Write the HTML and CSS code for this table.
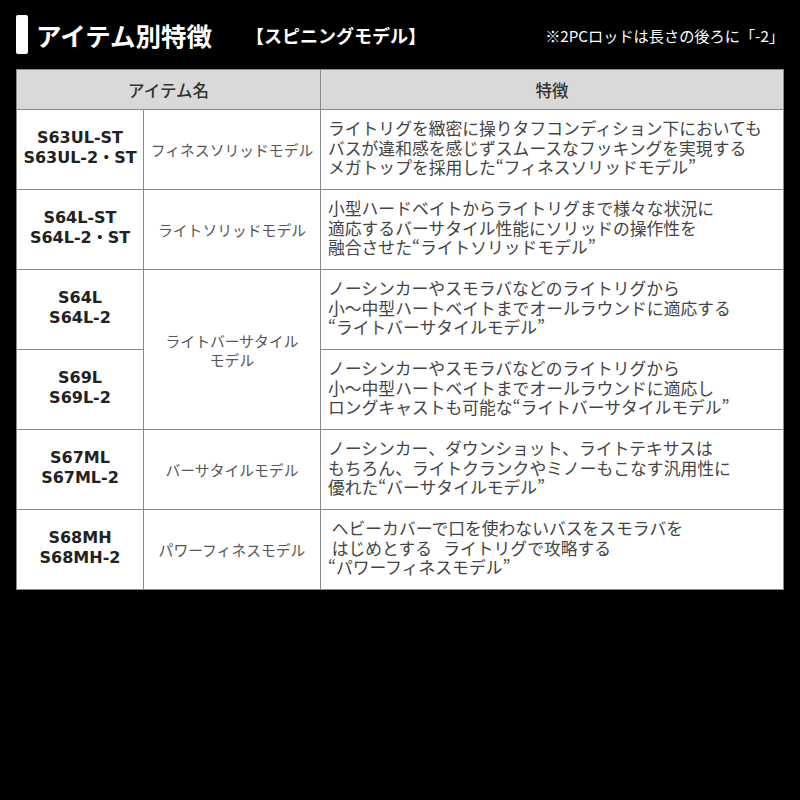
FILE: index.html
```html
<!DOCTYPE html>
<html lang="ja">
<head>
<meta charset="utf-8">
<link rel="stylesheet" href="styles.css">
</head>
<body>
<div class="page">
  <header class="head">
    <span class="bar"></span>
    <h1 class="title">アイテム別特徴</h1>
    <span class="sub">【スピニングモデル】</span>
    <span class="note">※2PCロッドは長さの後ろに「-2」</span>
  </header>
  <div class="grid">
    <div class="th th-item">アイテム名</div>
    <div class="th">特徴</div>

    <div class="model">S63UL-ST<br>S63UL-2・ST</div>
    <div class="type">フィネスソリッドモデル</div>
    <div class="desc">ライトリグを緻密に操りタフコンディション下においても<br>バスが違和感を感じずスムースなフッキングを実現する<br>メガトップを採用した“フィネスソリッドモデル”</div>

    <div class="model">S64L-ST<br>S64L-2・ST</div>
    <div class="type">ライトソリッドモデル</div>
    <div class="desc">小型ハードベイトからライトリグまで様々な状況に<br>適応するバーサタイル性能にソリッドの操作性を<br>融合させた“ライトソリッドモデル”</div>

    <div class="model">S64L<br>S64L-2</div>
    <div class="type span2">ライトバーサタイル<br>モデル</div>
    <div class="desc">ノーシンカーやスモラバなどのライトリグから<br>小～中型ハートベイトまでオールラウンドに適応する<br>“ライトバーサタイルモデル”</div>

    <div class="model">S69L<br>S69L-2</div>
    <div class="desc">ノーシンカーやスモラバなどのライトリグから<br>小～中型ハートベイトまでオールラウンドに適応し<br>ロングキャストも可能な“ライトバーサタイルモデル”</div>

    <div class="model">S67ML<br>S67ML-2</div>
    <div class="type">バーサタイルモデル</div>
    <div class="desc">ノーシンカー、ダウンショット、ライトテキサスは<br>もちろん、ライトクランクやミノーもこなす汎用性に<br>優れた“バーサタイルモデル”</div>

    <div class="model">S68MH<br>S68MH-2</div>
    <div class="type">パワーフィネスモデル</div>
    <div class="desc pre"> ヘビーカバーで口を使わないバスをスモラバを<br> はじめとする   ライトリグで攻略する<br>“パワーフィネスモデル”</div>
  </div>
</div>
</body>
</html>
```
FILE: styles.css
```css
html, body {
  margin: 0;
  padding: 0;
  background: #000;
}
body {
  width: 800px;
  height: 800px;
  font-family: "Noto Sans CJK JP", "Noto Sans", sans-serif;
}
.page {
  padding: 15px 16px 0 16px;
}
.head {
  display: flex;
  align-items: center;
  height: 39px;
  color: #fff;
}
.bar {
  width: 12px;
  height: 39px;
  background: #fff;
  border-radius: 2px;
  flex: none;
}
.title {
  margin: 0 0 0 8px;
  font-size: 25.5px;
  font-weight: 700;
  line-height: 1;
  letter-spacing: 0;
}
.sub {
  margin-left: 34px;
  font-size: 18px;
  font-weight: 700;
}
.note {
  margin-left: auto;
  font-size: 15.2px;
  font-weight: 400;
}
.grid {
  margin-top: 15px;
  display: grid;
  grid-template-columns: 126px 176px 1fr;
  grid-template-rows: 39px repeat(6, 79px);
  gap: 1px;
  background: #8a8a8a;
  border: 1px solid #8a8a8a;
}
.grid > div {
  background: #fff;
  display: flex;
  align-items: center;
}
.grid > .th {
  background: #d9d9d9;
  justify-content: center;
  color: #333;
  font-size: 16.5px;
  font-weight: 500;
}
.th-item {
  grid-column: 1 / 3;
}
.model {
  justify-content: center;
  text-align: center;
  font-family: "DejaVu Sans", "Noto Sans CJK JP", sans-serif;
  font-weight: 700;
  font-size: 16px;
  line-height: 20px;
  color: #222;
  padding-bottom: 3px;
}
.type {
  justify-content: center;
  text-align: center;
  color: #555;
  font-size: 14.8px;
  line-height: 19px;
}
.span2 {
  grid-row: span 2;
}
.desc {
  padding-left: 7px;
  color: #444;
  font-size: 16.8px;
  line-height: 19.5px;
  padding-bottom: 2px;
}
.pre {
  white-space: pre;
}
```
